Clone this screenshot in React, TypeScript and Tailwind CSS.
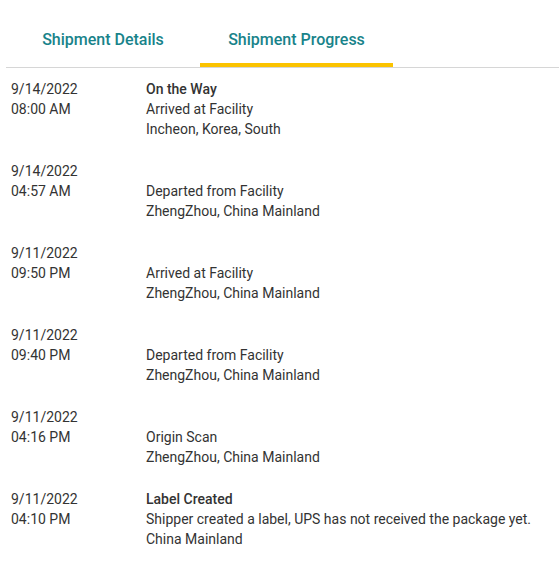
import React from 'react';

type Event = {
  date: string;
  time: string;
  title?: string;
  status: string;
  location: string;
};

const EVENTS: Event[] = [
  { date: '9/14/2022', time: '08:00 AM', title: 'On the Way', status: 'Arrived at Facility', location: 'Incheon, Korea, South' },
  { date: '9/14/2022', time: '04:57 AM', status: 'Departed from Facility', location: 'ZhengZhou, China Mainland' },
  { date: '9/11/2022', time: '09:50 PM', status: 'Arrived at Facility', location: 'ZhengZhou, China Mainland' },
  { date: '9/11/2022', time: '09:40 PM', status: 'Departed from Facility', location: 'ZhengZhou, China Mainland' },
  { date: '9/11/2022', time: '04:16 PM', status: 'Origin Scan', location: 'ZhengZhou, China Mainland' },
  {
    date: '9/11/2022',
    time: '04:10 PM',
    title: 'Label Created',
    status: 'Shipper created a label, UPS has not received the package yet.',
    location: 'China Mainland',
  },
];

const Tabs: React.FC = () => (
  <div className="ml-[6px] flex border-b border-[#d6d6d6] pt-[28px]">
    <div className="flex w-[194px] justify-center pb-[15px] text-[16px] font-medium leading-6 text-[#18838a]">
      Shipment Details
    </div>
    <div className="flex w-[193px] justify-center border-b-4 border-[#fbc300] pb-[11px] text-[16px] font-medium leading-6 text-[#18838a]">
      Shipment Progress
    </div>
  </div>
);

const EventRow: React.FC<{ event: Event }> = ({ event }) => (
  <div className="flex h-[82px] text-[14px] leading-5 text-[#333]">
    <div className="w-[135px] shrink-0">
      <p>{event.date}</p>
      <p>{event.time}</p>
    </div>
    <div>
      <p className="font-medium">{event.title ?? '\u00a0'}</p>
      <p>{event.status}</p>
      <p>{event.location}</p>
    </div>
  </div>
);

export default function App() {
  return (
    <div className="h-[567px] w-[559px] bg-white" style={{ fontFamily: 'Roboto, "Liberation Sans", sans-serif' }}>
      <Tabs />
      <div className="pl-[11px] pt-[11px]">
        {EVENTS.map((e, i) => (
          <EventRow key={i} event={e} />
        ))}
      </div>
    </div>
  );
}
